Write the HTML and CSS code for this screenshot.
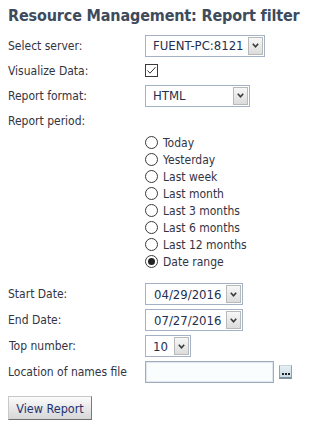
FILE: index.html
```html
<!DOCTYPE html>
<html>
<head>
<meta charset="utf-8">
<link rel="stylesheet" href="styles.css">
</head>
<body>
<h1 class="title">Resource Management: Report filter</h1>
<div class="form">
  <div class="row">
    <div class="label">Select server:</div>
    <div class="select w-server"><span class="val">FUENT-PC:8121</span><span class="arrow"><svg width="7" height="5" viewBox="0 0 7 5"><polyline points="0.8,0.8 3.5,3.8 6.2,0.8" fill="none" stroke="#3a3a3a" stroke-width="1.6"/></svg></span></div>
  </div>
  <div class="row">
    <div class="label">Visualize Data:</div>
    <div class="checkbox"><svg width="11" height="11" viewBox="0 0 11 11"><polyline points="1.5,5.5 4,8.2 9.5,2.2" fill="none" stroke="#333" stroke-width="1"/></svg></div>
  </div>
  <div class="row">
    <div class="label">Report format:</div>
    <div class="select w-format"><span class="val">HTML</span><span class="arrow"><svg width="7" height="5" viewBox="0 0 7 5"><polyline points="0.8,0.8 3.5,3.8 6.2,0.8" fill="none" stroke="#3a3a3a" stroke-width="1.6"/></svg></span></div>
  </div>
  <div class="row row-period">
    <div class="label">Report period:</div>
  </div>
  <div class="radios">
    <div class="radio"><span class="circle"></span><span>Today</span></div>
    <div class="radio"><span class="circle"></span><span>Yesterday</span></div>
    <div class="radio"><span class="circle"></span><span>Last week</span></div>
    <div class="radio"><span class="circle"></span><span>Last month</span></div>
    <div class="radio"><span class="circle"></span><span>Last 3 months</span></div>
    <div class="radio"><span class="circle"></span><span>Last 6 months</span></div>
    <div class="radio"><span class="circle"></span><span>Last 12 months</span></div>
    <div class="radio"><span class="circle checked"></span><span>Date range</span></div>
  </div>
  <div class="dates">
    <div class="row row26">
      <div class="label">Start Date:</div>
      <div class="select w-date"><span class="val">04/29/2016</span><span class="arrow"><svg width="7" height="5" viewBox="0 0 7 5"><polyline points="0.8,0.8 3.5,3.8 6.2,0.8" fill="none" stroke="#3a3a3a" stroke-width="1.6"/></svg></span></div>
    </div>
    <div class="row row26">
      <div class="label">End Date:</div>
      <div class="select w-date"><span class="val">07/27/2016</span><span class="arrow"><svg width="7" height="5" viewBox="0 0 7 5"><polyline points="0.8,0.8 3.5,3.8 6.2,0.8" fill="none" stroke="#3a3a3a" stroke-width="1.6"/></svg></span></div>
    </div>
    <div class="row row26">
      <div class="label label-indent">Top number:</div>
      <div class="select w-top"><span class="val">10</span><span class="arrow"><svg width="7" height="5" viewBox="0 0 7 5"><polyline points="0.8,0.8 3.5,3.8 6.2,0.8" fill="none" stroke="#3a3a3a" stroke-width="1.6"/></svg></span></div>
    </div>
    <div class="row row26">
      <div class="label">Location of names file</div>
      <div class="file-wrap">
        <div class="textbox"></div>
        <div class="browse"><span class="dot"></span><span class="dot"></span><span class="dot"></span></div>
      </div>
    </div>
  </div>
  <div class="actions">
    <div class="button">View Report</div>
  </div>
</div>
</body>
</html>
```

FILE: styles.css
```css
html, body {
  margin: 0;
  padding: 0;
  background: #ffffff;
}
body {
  padding: 0 8px;
  font-family: "DejaVu Sans Condensed", "DejaVu Sans", sans-serif;
  font-size: 12px;
  color: #33343f;
}
.title {
  margin: 0;
  padding-top: 6px;
  height: 27px;
  box-sizing: border-box;
  line-height: 20px;
  font-size: 16px;
  font-weight: bold;
  letter-spacing: -0.15px;
  color: #3d4b5c;
  white-space: nowrap;
}
.form {
  padding-top: 6px;
}
.row {
  display: flex;
  align-items: center;
  height: 25px;
}
.row-period {
  height: 26px;
}
.row26 {
  height: 26px;
}
.label {
  width: 137px;
  flex: none;
}
.label-indent {
  padding-left: 1px;
  box-sizing: border-box;
}
.select {
  display: flex;
  align-items: stretch;
  height: 22px;
  box-sizing: border-box;
  border: 1px solid #a3b2c4;
  background: #fff;
  color: #22304f;
  font-size: 13px;
}
.w-server { width: 120px; }
.w-format { width: 105px; }
.w-date { width: 98px; }
.w-top { width: 46px; }
.select .val {
  flex: 1;
  padding-left: 7px;
  display: flex;
  align-items: center;
  white-space: nowrap;
  overflow: hidden;
}
.w-date .val {
  padding-left: 8px;
}
.select .arrow {
  width: 15px;
  margin: 1px;
  box-sizing: border-box;
  border: 1px solid #b9b9b9;
  background: linear-gradient(#f7f7f7, #dcdcdc);
  display: flex;
  align-items: center;
  justify-content: center;
}
.checkbox {
  width: 13px;
  height: 13px;
  box-sizing: border-box;
  border: 1px solid #3a3a3a;
  background: #fff;
  display: flex;
  align-items: center;
  justify-content: center;
}
.checkbox svg {
  display: block;
}
.radios {
  padding-left: 137px;
}
.radio {
  display: flex;
  align-items: center;
  height: 17px;
  gap: 5px;
}
.circle {
  width: 13px;
  height: 13px;
  box-sizing: border-box;
  border: 1px solid #3a3a3a;
  border-radius: 50%;
  background: #fff;
  display: flex;
  align-items: center;
  justify-content: center;
}
.circle.checked::after {
  content: "";
  width: 7px;
  height: 7px;
  border-radius: 50%;
  background: #222;
}
.dates {
  padding-top: 11px;
}
.file-wrap {
  display: flex;
  align-items: center;
  gap: 5px;
}
.textbox {
  width: 129px;
  height: 22px;
  box-sizing: border-box;
  border: 1px solid #9fadbf;
  box-shadow: inset 0 0 0 1px #dfe6ee;
  background: #fafdfd;
}
.browse {
  width: 13px;
  height: 14px;
  box-sizing: border-box;
  border: 1px solid #8fa3b3;
  border-top-color: #c9d6de;
  border-bottom: 2px solid #7d909e;
  background: linear-gradient(#e4eef3, #ccdde5);
  display: flex;
  align-items: flex-end;
  justify-content: center;
  gap: 1px;
  padding-bottom: 2px;
}
.dot {
  width: 2px;
  height: 2px;
  background: #222;
}
.actions {
  padding-top: 11px;
}
.button {
  width: 84px;
  height: 24px;
  box-sizing: border-box;
  border: 1px solid #c8c8c8;
  border-right-color: #7a7a7a;
  border-bottom-color: #6e6e6e;
  background: linear-gradient(#fbfbfb, #d6d6d6);
  color: #1f3272;
  font-size: 12.5px;
  display: flex;
  align-items: center;
  justify-content: center;
}
```
